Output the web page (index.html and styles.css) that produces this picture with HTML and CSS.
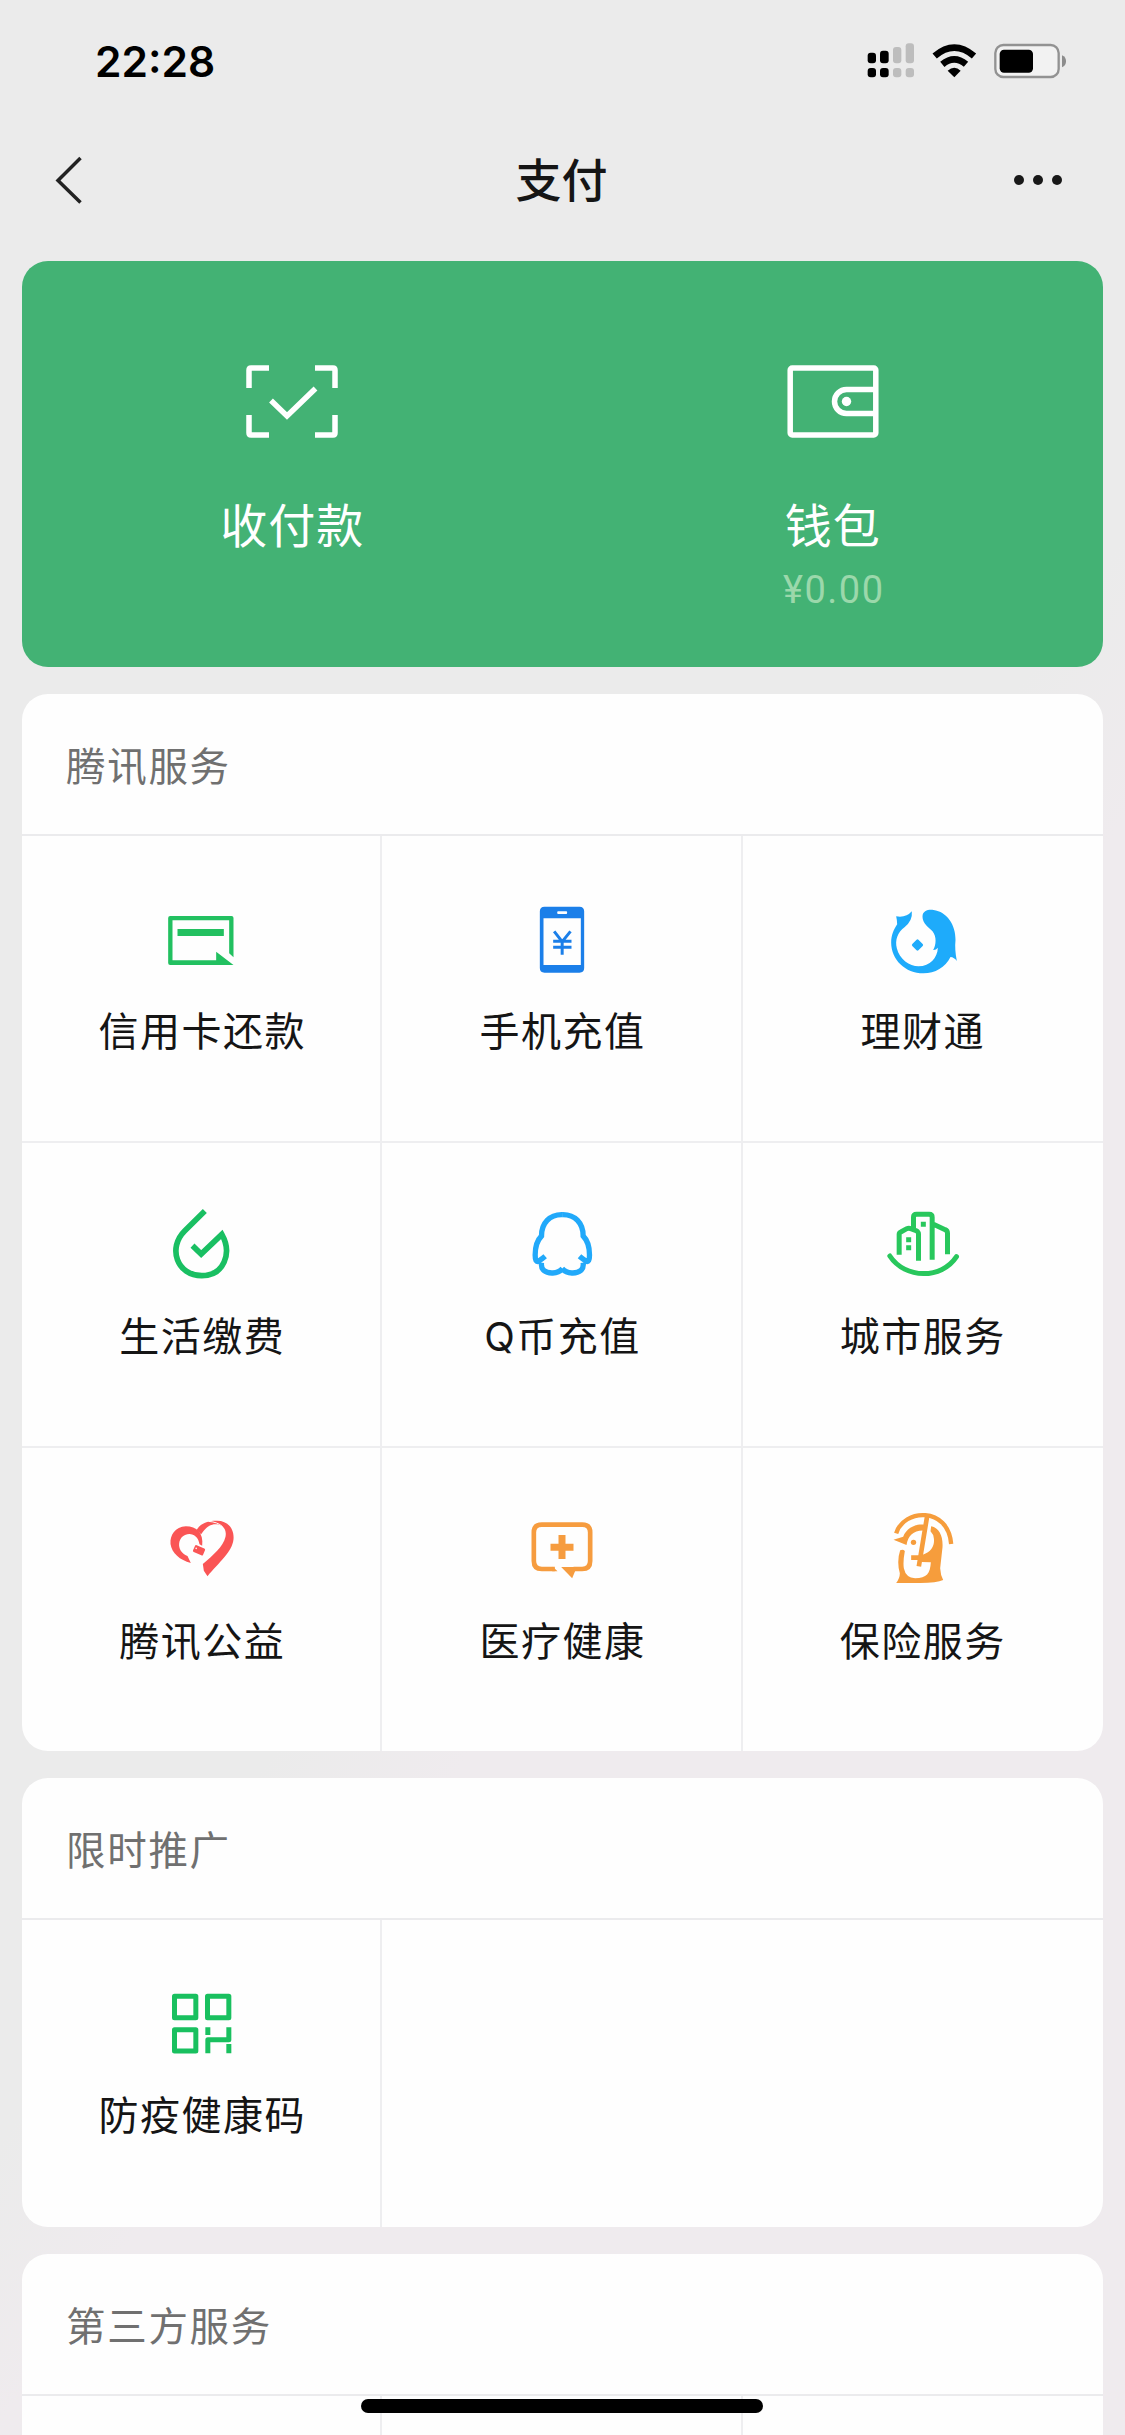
FILE: index.html
```html
<!DOCTYPE html>
<html lang="zh-CN">
<head>
<meta charset="utf-8">
<title>支付</title>
<link rel="stylesheet" href="styles.css">
</head>
<body>
<div class="screen">
  <header class="status">
    <span class="time">22:28</span>
    <svg class="status-icons" viewBox="75 60 615 120">
      <g fill="#000"><rect x="83" y="98" width="25" height="32" rx="9"/><rect x="120" y="92" width="26" height="38" rx="9"/><rect x="83" y="144" width="25" height="28" rx="9"/><rect x="120" y="144" width="26" height="28" rx="9"/></g>
      <g fill="#bdbdbd"><rect x="159" y="81" width="25" height="49" rx="9"/><rect x="197" y="70" width="25" height="60" rx="9"/><rect x="159" y="144" width="25" height="28" rx="9"/><rect x="197" y="144" width="25" height="28" rx="9"/></g>
      <g fill="none" stroke="#000" stroke-width="20"><path d="M284 108Q343 58 402 108"/><path d="M307 133Q343 103 378 133"/></g>
      <path d="M323 152Q343 135 362 152L343 172Z"/>
      <rect x="466" y="75" width="190" height="96" rx="24" fill="#f2f2f2" stroke="#929292" stroke-width="7"/>
      <rect x="479" y="89" width="100" height="69" rx="13"/>
      <path d="M666 106Q678 111 678 124T666 142Z" fill="#8c8c8c"/>
    </svg>
  </header>

  <nav class="nav">
    <svg class="back" viewBox="0 0 28 48"><path d="M25.500 2L3 24.500L25.500 46.500" fill="none" stroke="#222" stroke-width="3.500"/></svg>
    <h1 class="title">支付</h1>
    <svg class="more" viewBox="0 0 50 12" fill="#181818"><circle cx="6" cy="6" r="5"/><circle cx="25" cy="6" r="5"/><circle cx="44" cy="6" r="5"/></svg>
  </nav>

  <main class="content">
    <section class="hero">
      <a class="hero-item">
        <svg class="hero-icon" viewBox="0 0 92 74"><g fill="none" stroke="#fff" stroke-width="5.500"><path d="M3 23V5Q3 3 5 3H23M69 3H87Q89 3 89 5V23M3 50V68Q3 70 5 70H23M69 70H87Q89 70 89 68V50"/><path d="M25 35.500L41 51L69.500 23.500"/></g></svg>
        <span class="hero-label">收付款</span>
      </a>
      <a class="hero-item">
        <svg class="hero-icon" viewBox="0 0 92 74"><g fill="none" stroke="#fff" stroke-width="5.500"><rect x="3.200" y="3" width="85.600" height="67" rx="2"/><path d="M89 24.500H59.500A12 12 0 0 0 59.500 48.500H89"/></g><circle cx="59.500" cy="36.500" r="4.700" fill="#fff"/></svg>
        <span class="hero-label">钱包</span>
        <span class="balance">¥0.00</span>
      </a>
    </section>

    <section class="card">
      <h2 class="card-title">腾讯服务</h2>
      <div class="grid">
        <a class="cell">
          <svg class="icon" viewBox="51.500 18 270 270" fill="#22c060"><path d="M91 78H275Q281 78 281 84V202L268 190V91H98V211H229V185L281 225H91Q85 225 85 219V84Q85 78 91 78Z"/><rect x="113" y="117" width="139" height="21"/></svg>
          <span class="label">信用卡还款</span>
        </a>
        <a class="cell">
          <svg class="icon" viewBox="52.500 18 270 270"><path fill="#1b7fe9" fill-rule="evenodd" d="M135 50H240Q254 50 254 64V234Q254 248 240 248H135Q121 248 121 234V64Q121 50 135 50ZM132 85V225H244V85ZM176 64Q173 64 173 68T176 72H200Q203 72 203 68T200 64Z"/><path d="M164 124L188 155L213 124M161 154H216M161 172H216M188 154V194" fill="none" stroke="#1b7fe9" stroke-width="9"/></svg>
          <span class="label">手机充值</span>
        </a>
        <a class="cell">
          <svg class="icon" viewBox="1133.500 18 270 270" fill="#1eabfb"><path d="M1188 79Q1218 84 1235 64Q1238 92 1213 112C1192 128 1184 150 1190 175C1198 208 1228 229 1255 229C1290 228 1312 203 1313 173Q1307 181 1299 180C1308 165 1310 140 1297 124C1285 111 1267 100 1267 80C1267 62 1285 58 1300 60C1340 65 1367 105 1366 150Q1363 178 1370 213Q1362 202 1351 201C1335 232 1305 250 1270 250C1215 250 1173 208 1173 158C1173 135 1181 118 1191 103Q1191 92 1188 79Z"/><rect x="1239" y="152" width="26" height="26" rx="4" transform="rotate(45 1252 165)"/></svg>
          <span class="label">理财通</span>
        </a>
        <a class="cell">
          <svg class="icon" viewBox="51.500 33 270 270"><path d="M195 63L135 122C82 174 112 257 186 257C252 257 278 190 246 133L184 192L158 167" fill="none" stroke="#19bf62" stroke-width="17"/></svg>
          <span class="label">生活缴费</span>
        </a>
        <a class="cell">
          <svg class="icon" viewBox="1132.500 33 270 270"><g fill="none" stroke="#21a9fa" stroke-width="16"><path id="half" d="M1269 74C1230 73 1206 100 1206 138C1190 154 1187 175 1187 195C1187 210 1190 217 1198 213Q1209 206 1217 199M1206 218C1203 239 1217 250 1240 249Q1258 248 1269 236"/><use href="#half" transform="translate(2537 0) scale(-1 1)"/></g></svg>
          <span class="label">Q币充值</span>
        </a>
        <a class="cell">
          <svg class="icon" viewBox="53.500 33 270 270"><g fill="none" stroke="#28c75c" stroke-width="15"><path d="M117 194V133Q117 128 122 126L140 116Q146 113 152 116L168 122Q175 126 175 132V212M160 117V82Q160 73 169 73H207Q216 73 216 82V209M220 103L255 119Q262 122 262 130V193"/><path d="M89 198C135 268 245 268 289 200" stroke-linecap="round"/></g><path fill="#28c75c" d="M182 95h15v15h-15zM138 142h15v15h-15zM138 166h15v15h-15z"/></svg>
          <span class="label">城市服务</span>
        </a>
        <a class="cell">
          <svg class="icon" viewBox="51.500 48 270 270" fill="#fa5555"><path d="M187 167C192 130 170 109 138 109C106 111 90 135 92 162C96 190 120 210 153 219L143 198C125 192 116 175 118 160C120 142 135 131 150 132C170 134 177 150 179 163Z"/><path d="M170 121C180 100 205 92 228 92C262 90 284 115 281 148C278 185 235 220 203 259L192 242L189 222C220 195 250 170 257 140C262 115 245 100 222 103C205 106 194 118 184 133Z"/><path d="M206 94Q234 96 248 110" fill="none" stroke="#fff" stroke-width="3"/><rect x="161" y="170" width="33" height="22" rx="4" transform="rotate(24 178 181)"/><circle cx="169" cy="175" r="2.500" fill="#fff"/></svg>
          <span class="label">腾讯公益</span>
        </a>
        <a class="cell">
          <svg class="icon" viewBox="1132.500 48 270 270"><path d="M1246 237H1207Q1183 237 1183 213V127Q1183 104 1207 104H1328Q1352 104 1352 127V213Q1352 237 1328 237H1302" fill="none" stroke="#f69c3f" stroke-width="14"/><path fill="#f69c3f" d="M1240 230L1254 244H1238ZM1265 231H1312L1298 265ZM1257 135h21v26h24v21h-24v25h-21v-25h-24v-21h24z"/></svg>
          <span class="label">医疗健康</span>
        </a>
        <a class="cell">
          <svg class="icon" viewBox="53.500 48 270 270"><g fill="none" stroke="#f69d3c" stroke-width="13"><path d="M108 130C130 56 264 48 273 162"/><path d="M201 78L176 229M153 203H190" stroke-width="14"/></g><path fill="#f69d3c" d="M100 149L129 140C138 116 164 101 192 104V122C162 120 144 136 139 165ZM213 109C238 114 249 140 247 172L240 235Q241 255 249 270Q230 279 180 279H108Q119 265 119 250Q109 214 120 181Q128 176 134 183Q128 215 131 235Q137 264 165 265C200 265 210 250 212 217L184 216L188 194C215 186 224 165 221 145Q220 133 211 124Z"/><circle cx="160" cy="157" r="8" fill="#f69d3c"/></svg>
          <span class="label">保险服务</span>
        </a>
      </div>
    </section>

    <section class="card promo">
      <h2 class="card-title">限时推广</h2>
      <div class="grid">
        <a class="cell">
          <svg class="icon" viewBox="471.500 720 270 270"><path d="M524 769H588V833H524ZM623 769H687V833H623ZM524 869H588V933H524ZM624 862V885M624 940V899H687V862M687 912V940" fill="none" stroke="#19c05f" stroke-width="15" stroke-linejoin="round"/></svg>
          <span class="label">防疫健康码</span>
        </a>
      </div>
    </section>

    <section class="card">
      <h2 class="card-title">第三方服务</h2>
      <div class="grid">
        <div class="cell"></div><div class="cell"></div><div class="cell"></div>
      </div>
    </section>
  </main>
  <div class="home-bar"></div>
</div>
</body>
</html>
```
FILE: styles.css
```css
* { box-sizing: border-box; }

body {
  margin: 0;
  font-family: "Noto Sans CJK SC", sans-serif;
  color: #151515;
}

h1, h2 { margin: 0; font-weight: 400; }

.screen {
  position: relative;
  width: 1125px;
  height: 2435px;
  overflow: hidden;
  background: linear-gradient(125deg, #ebebeb 53%, #efebee 60%);
}

.status {
  display: flex;
  align-items: center;
  justify-content: space-between;
  height: 122px;
  padding: 0 55px 0 95px;
}

.time {
  margin-top: 1px;
  font: 600 42.5px/50px Inter, sans-serif;
  color: #000;
}

.status-icons { width: 205px; height: 40px; margin-top: -2px; }

.nav {
  display: flex;
  align-items: center;
  justify-content: space-between;
  height: 116px;
  padding: 0 62px 1px 55px;
}

.back { width: 28px; height: 48px; }
.more { width: 50px; height: 12px; }

.title {
  font-size: 46px;
  line-height: 60px;
  font-weight: 500;
  margin: -5px 0 0 27px;
}

.content {
  display: flex;
  flex-direction: column;
  gap: 27px;
  padding: 23px 22px 0;
}

.hero {
  display: flex;
  height: 406px;
  border-radius: 26px;
  background: #43b274;
  color: #fff;
}

.hero-item {
  flex: 1;
  display: flex;
  flex-direction: column;
  align-items: center;
  padding-top: 104px;
}

.hero-icon { width: 92px; height: 74px; }

.hero-label {
  margin-top: 54px;
  font-size: 47px;
  line-height: 60px;
  letter-spacing: 1px;
}

.balance {
  margin-top: 13px;
  font: 400 38px/48px Roboto, sans-serif;
  letter-spacing: 1.5px;
  margin-right: -2px;
  color: #9bd8ab;
}

.card {
  overflow: hidden;
  border-radius: 26px;
  background: #fefefe;
}

.card-title {
  height: 142px;
  padding-left: 44px;
  border-bottom: 2px solid #ebebed;
  font-size: 39.5px;
  line-height: 140px;
  letter-spacing: 1.7px;
  color: #707070;
}

.grid {
  display: grid;
  grid-template-columns: repeat(3, 1fr);
  grid-auto-rows: 305px;
}

.promo .grid { grid-auto-rows: 307px; }

.cell {
  display: flex;
  flex-direction: column;
  align-items: center;
  padding-top: 60px;
  box-shadow: inset -2px 0 #eeeef0;
}

.cell:nth-child(3n) { box-shadow: none; }
.cell:nth-child(n+4) { box-shadow: inset -2px 2px #eeeef0; }
.cell:nth-child(3n+6) { box-shadow: inset 0 2px #eeeef0; }

.icon { width: 90px; height: 90px; }

.label {
  margin-top: 22px;
  font-family: Inter, "Noto Sans CJK SC", sans-serif;
  font-size: 40px;
  line-height: 48px;
  letter-spacing: 1.5px;
}

.home-bar {
  position: absolute;
  left: 361px;
  top: 2399px;
  width: 402px;
  height: 14px;
  border-radius: 7px;
  background: #000;
}
```
